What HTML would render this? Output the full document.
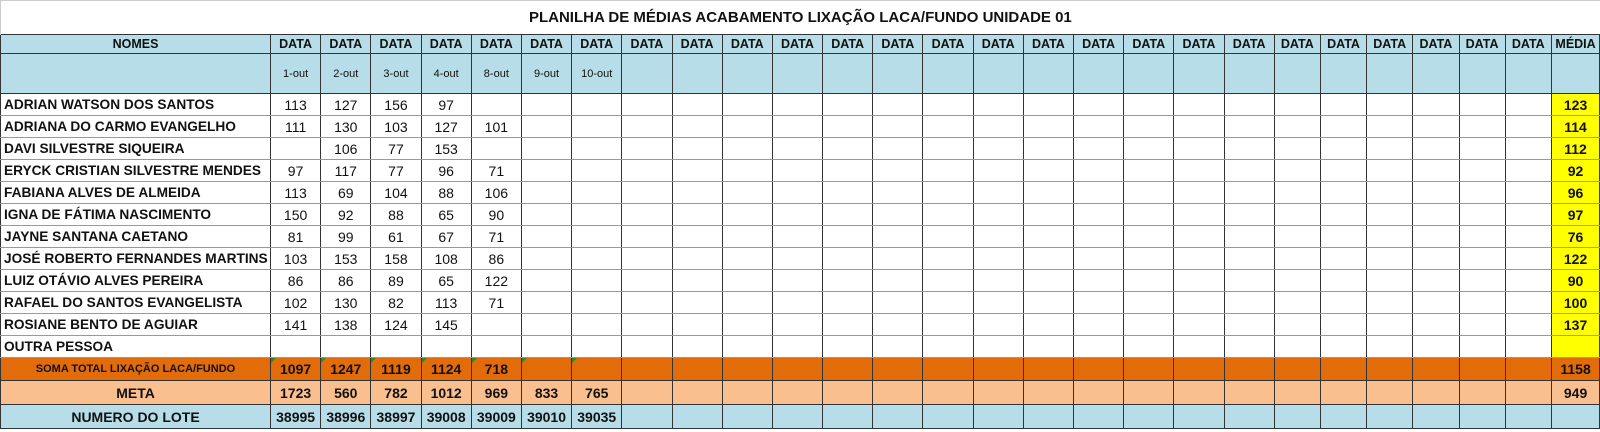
<!DOCTYPE html>
<html><head><meta charset="utf-8">
<style>
html,body{margin:0;padding:0;background:#fff;width:1600px;height:432px;overflow:hidden}
table{border-collapse:collapse;table-layout:fixed;font-family:"Liberation Sans",Arial,sans-serif;position:absolute;left:0;top:0;width:1599px}
td{border:1px solid #333;padding:0;text-align:center;font-size:14px;color:#111;overflow:hidden;white-space:nowrap}
tr.t td{border:none;border-top:1px solid #ccc;border-left:1px solid #ccc;font-weight:bold;font-size:15px;height:33px}
tr.h td{background:#b7dde8;font-weight:bold;font-size:12.5px;height:18px}
tr.d td{background:#b7dde8;font-size:11px;height:39px}
tr.n td{height:21px;border-top-color:#999;border-bottom-color:#999}
tr.n td:first-child{text-align:left;font-weight:bold;padding-left:3px;font-size:13.7px}
tr.n td:last-child{background:#ffff00;font-weight:bold}
tr.s td{background:#e26b0a;font-weight:bold;height:22px;position:relative}
tr.s td:first-child{font-size:11px}
tr.m td{background:#fabf8f;font-weight:bold;height:23px}
tr.l td{background:#b7dde8;font-weight:bold;height:23px}
.g{position:relative}
.g:before{content:"";position:absolute;left:0;top:0;border-top:5px solid #2a8a2a;border-right:5px solid transparent}
</style></head><body>
<table>
<colgroup><col style="width:270px">
<col style="width:50.2px"><col style="width:50.2px"><col style="width:50.2px"><col style="width:50.2px"><col style="width:50.2px"><col style="width:50.2px"><col style="width:50.2px"><col style="width:50.2px"><col style="width:50.2px"><col style="width:50.2px"><col style="width:50.2px"><col style="width:50.2px"><col style="width:50.2px"><col style="width:50.2px"><col style="width:50.2px"><col style="width:50.2px"><col style="width:50.2px"><col style="width:50.2px"><col style="width:50.2px"><col style="width:50.2px">
<col style="width:46.2px"><col style="width:46.2px"><col style="width:46.2px"><col style="width:46.2px"><col style="width:46.2px"><col style="width:46.2px">
<col style="width:48px"></colgroup>
<tr class="t"><td colspan="28">PLANILHA DE MÉDIAS ACABAMENTO LIXAÇÃO LACA/FUNDO UNIDADE 01</td></tr>
<tr class="h"><td>NOMES</td><td>DATA</td><td>DATA</td><td>DATA</td><td>DATA</td><td>DATA</td><td>DATA</td><td>DATA</td><td>DATA</td><td>DATA</td><td>DATA</td><td>DATA</td><td>DATA</td><td>DATA</td><td>DATA</td><td>DATA</td><td>DATA</td><td>DATA</td><td>DATA</td><td>DATA</td><td>DATA</td><td>DATA</td><td>DATA</td><td>DATA</td><td>DATA</td><td>DATA</td><td>DATA</td><td>MÉDIA</td></tr>
<tr class="d"><td></td><td>1-out</td><td>2-out</td><td>3-out</td><td>4-out</td><td>8-out</td><td>9-out</td><td>10-out</td><td></td><td></td><td></td><td></td><td></td><td></td><td></td><td></td><td></td><td></td><td></td><td></td><td></td><td></td><td></td><td></td><td></td><td></td><td></td><td></td></tr>
<tr class="n"><td>ADRIAN WATSON DOS SANTOS</td><td>113</td><td>127</td><td>156</td><td>97</td><td></td><td></td><td></td><td></td><td></td><td></td><td></td><td></td><td></td><td></td><td></td><td></td><td></td><td></td><td></td><td></td><td></td><td></td><td></td><td></td><td></td><td></td><td>123</td></tr>
<tr class="n"><td>ADRIANA DO CARMO EVANGELHO</td><td>111</td><td>130</td><td>103</td><td>127</td><td>101</td><td></td><td></td><td></td><td></td><td></td><td></td><td></td><td></td><td></td><td></td><td></td><td></td><td></td><td></td><td></td><td></td><td></td><td></td><td></td><td></td><td></td><td>114</td></tr>
<tr class="n"><td>DAVI SILVESTRE SIQUEIRA</td><td></td><td>106</td><td>77</td><td>153</td><td></td><td></td><td></td><td></td><td></td><td></td><td></td><td></td><td></td><td></td><td></td><td></td><td></td><td></td><td></td><td></td><td></td><td></td><td></td><td></td><td></td><td></td><td>112</td></tr>
<tr class="n"><td>ERYCK CRISTIAN SILVESTRE MENDES</td><td>97</td><td>117</td><td>77</td><td>96</td><td>71</td><td></td><td></td><td></td><td></td><td></td><td></td><td></td><td></td><td></td><td></td><td></td><td></td><td></td><td></td><td></td><td></td><td></td><td></td><td></td><td></td><td></td><td>92</td></tr>
<tr class="n"><td>FABIANA ALVES DE ALMEIDA</td><td>113</td><td>69</td><td>104</td><td>88</td><td>106</td><td></td><td></td><td></td><td></td><td></td><td></td><td></td><td></td><td></td><td></td><td></td><td></td><td></td><td></td><td></td><td></td><td></td><td></td><td></td><td></td><td></td><td>96</td></tr>
<tr class="n"><td>IGNA DE FÁTIMA NASCIMENTO</td><td>150</td><td>92</td><td>88</td><td>65</td><td>90</td><td></td><td></td><td></td><td></td><td></td><td></td><td></td><td></td><td></td><td></td><td></td><td></td><td></td><td></td><td></td><td></td><td></td><td></td><td></td><td></td><td></td><td>97</td></tr>
<tr class="n"><td>JAYNE SANTANA CAETANO</td><td>81</td><td>99</td><td>61</td><td>67</td><td>71</td><td></td><td></td><td></td><td></td><td></td><td></td><td></td><td></td><td></td><td></td><td></td><td></td><td></td><td></td><td></td><td></td><td></td><td></td><td></td><td></td><td></td><td>76</td></tr>
<tr class="n"><td>JOSÉ ROBERTO FERNANDES MARTINS</td><td>103</td><td>153</td><td>158</td><td>108</td><td>86</td><td></td><td></td><td></td><td></td><td></td><td></td><td></td><td></td><td></td><td></td><td></td><td></td><td></td><td></td><td></td><td></td><td></td><td></td><td></td><td></td><td></td><td>122</td></tr>
<tr class="n"><td>LUIZ OTÁVIO ALVES PEREIRA</td><td>86</td><td>86</td><td>89</td><td>65</td><td>122</td><td></td><td></td><td></td><td></td><td></td><td></td><td></td><td></td><td></td><td></td><td></td><td></td><td></td><td></td><td></td><td></td><td></td><td></td><td></td><td></td><td></td><td>90</td></tr>
<tr class="n"><td>RAFAEL DO SANTOS EVANGELISTA</td><td>102</td><td>130</td><td>82</td><td>113</td><td>71</td><td></td><td></td><td></td><td></td><td></td><td></td><td></td><td></td><td></td><td></td><td></td><td></td><td></td><td></td><td></td><td></td><td></td><td></td><td></td><td></td><td></td><td>100</td></tr>
<tr class="n"><td>ROSIANE BENTO DE AGUIAR</td><td>141</td><td>138</td><td>124</td><td>145</td><td></td><td></td><td></td><td></td><td></td><td></td><td></td><td></td><td></td><td></td><td></td><td></td><td></td><td></td><td></td><td></td><td></td><td></td><td></td><td></td><td></td><td></td><td>137</td></tr>
<tr class="n"><td>OUTRA PESSOA</td><td></td><td></td><td></td><td></td><td></td><td></td><td></td><td></td><td></td><td></td><td></td><td></td><td></td><td></td><td></td><td></td><td></td><td></td><td></td><td></td><td></td><td></td><td></td><td></td><td></td><td></td><td></td></tr>
<tr class="s"><td>SOMA TOTAL LIXAÇÃO LACA/FUNDO</td><td class="g">1097</td><td class="g">1247</td><td class="g">1119</td><td class="g">1124</td><td class="g">718</td><td class="g"></td><td class="g"></td><td></td><td></td><td></td><td></td><td></td><td></td><td></td><td></td><td></td><td></td><td></td><td></td><td></td><td></td><td></td><td></td><td></td><td></td><td></td><td>1158</td></tr>
<tr class="m"><td>META</td><td>1723</td><td>560</td><td>782</td><td>1012</td><td>969</td><td>833</td><td>765</td><td></td><td></td><td></td><td></td><td></td><td></td><td></td><td></td><td></td><td></td><td></td><td></td><td></td><td></td><td></td><td></td><td></td><td></td><td></td><td>949</td></tr>
<tr class="l"><td>NUMERO DO LOTE</td><td>38995</td><td>38996</td><td>38997</td><td>39008</td><td>39009</td><td>39010</td><td>39035</td><td></td><td></td><td></td><td></td><td></td><td></td><td></td><td></td><td></td><td></td><td></td><td></td><td></td><td></td><td></td><td></td><td></td><td></td><td></td><td></td></tr>
</table>
</body></html>
